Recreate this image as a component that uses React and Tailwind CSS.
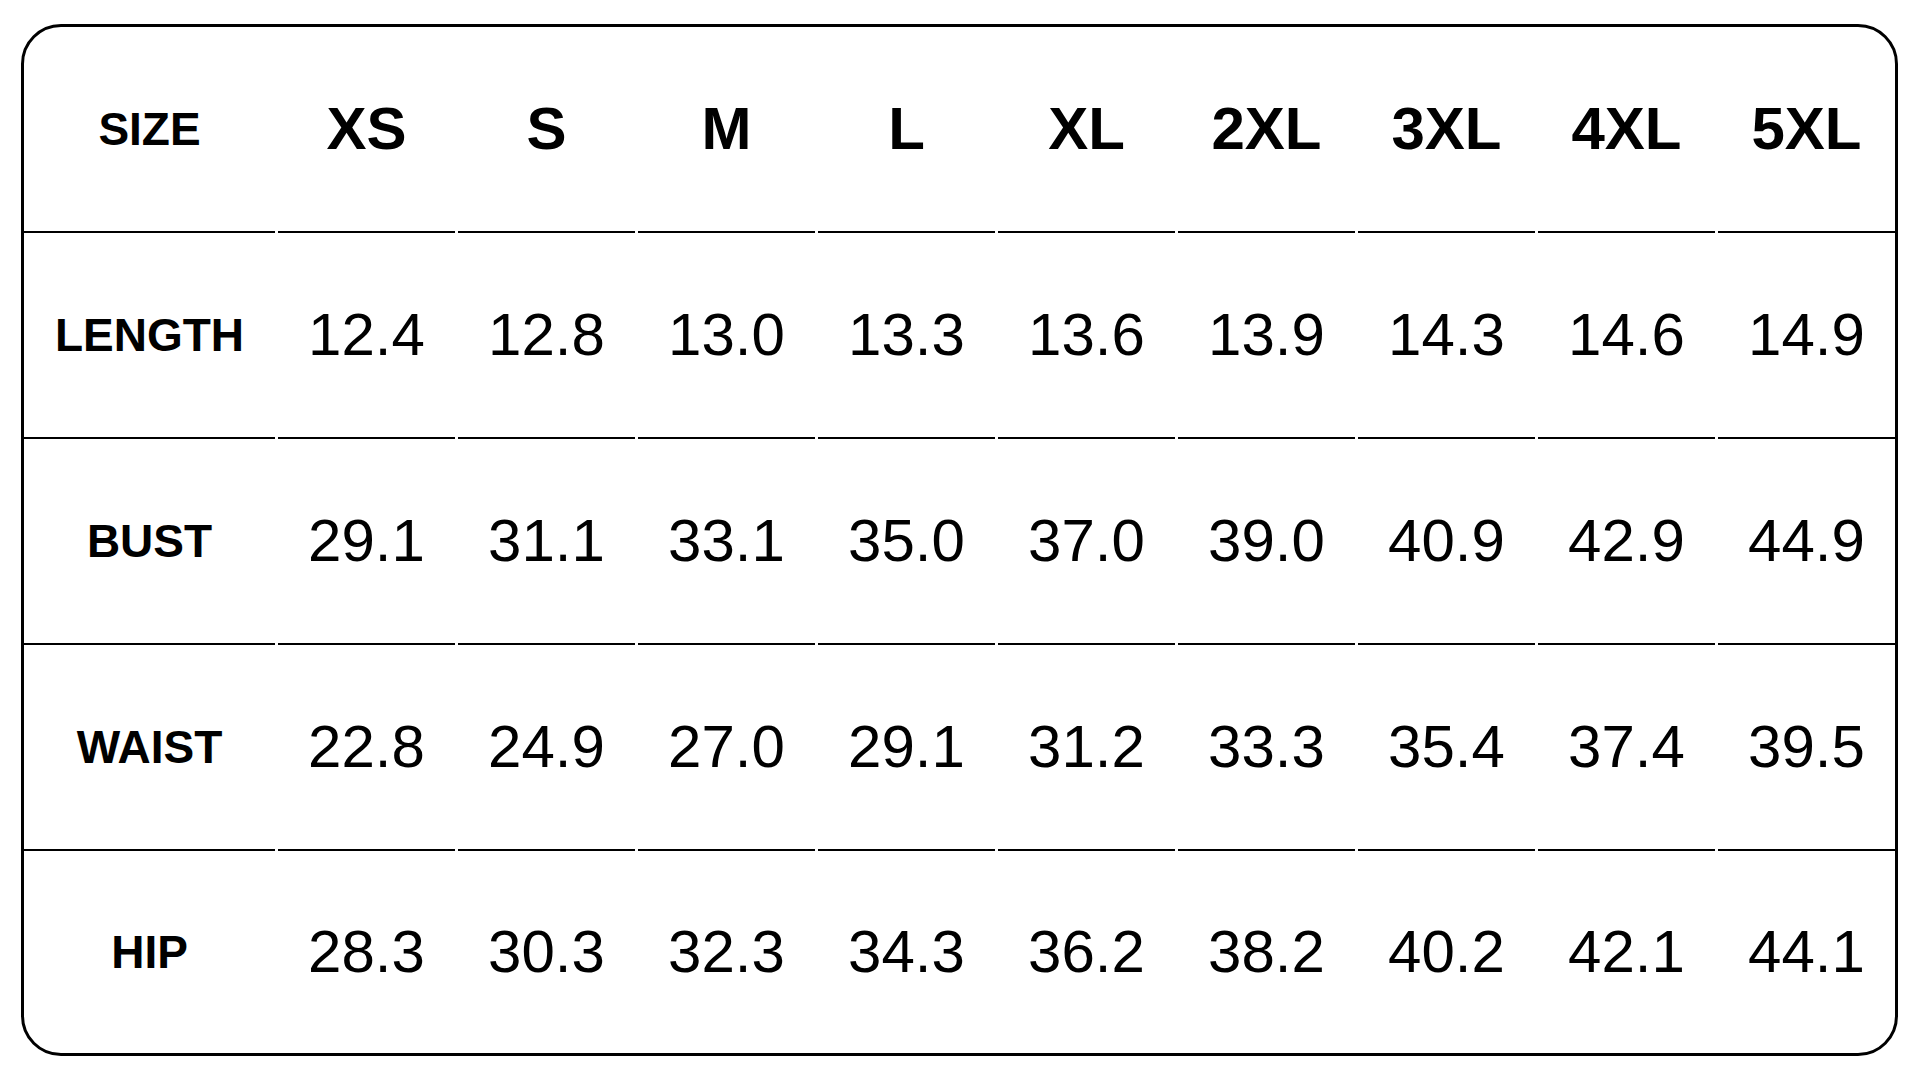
import React from "react";

const sizes = ["XS", "S", "M", "L", "XL", "2XL", "3XL", "4XL", "5XL"];
const rows = [
  ["LENGTH", ["12.4", "12.8", "13.0", "13.3", "13.6", "13.9", "14.3", "14.6", "14.9"]],
  ["BUST", ["29.1", "31.1", "33.1", "35.0", "37.0", "39.0", "40.9", "42.9", "44.9"]],
  ["WAIST", ["22.8", "24.9", "27.0", "29.1", "31.2", "33.3", "35.4", "37.4", "39.5"]],
  ["HIP", ["28.3", "30.3", "32.3", "34.3", "36.2", "38.2", "40.2", "42.1", "44.1"]],
];

function Row({ label, values, header, last }) {
  const rowCls = last
    ? "grid grid-cols-[251px_repeat(9,177px)] gap-x-[3px] flex-1"
    : "grid grid-cols-[251px_repeat(9,177px)] gap-x-[3px] h-[206px]";
  const cellCls = last
    ? "flex items-center justify-center"
    : "flex items-center justify-center border-b-2 border-black";
  const valCls = header
    ? "text-[60px] font-bold leading-none text-black"
    : "text-[60px] font-normal leading-none text-black";
  return (
    <div className={rowCls}>
      <div className={cellCls}>
        <span className="text-[46px] font-bold leading-none text-black">{label}</span>
      </div>
      {values.map((v, i) => (
        <div key={i} className={cellCls}>
          <span className={valCls}>{v}</span>
        </div>
      ))}
    </div>
  );
}

export default function App() {
  return (
    <div className="w-[1920px] h-[1080px] bg-white pt-[24px] pl-[21px] font-['Liberation_Sans',Arial,sans-serif]">
      <div className="w-[1877px] h-[1032px] border-[3px] border-black rounded-[40px] flex flex-col overflow-hidden">
        <Row label="SIZE" values={sizes} header />
        {rows.map(([l, v], i) => (
          <Row key={l} label={l} values={v} last={i === rows.length - 1} />
        ))}
      </div>
    </div>
  );
}
